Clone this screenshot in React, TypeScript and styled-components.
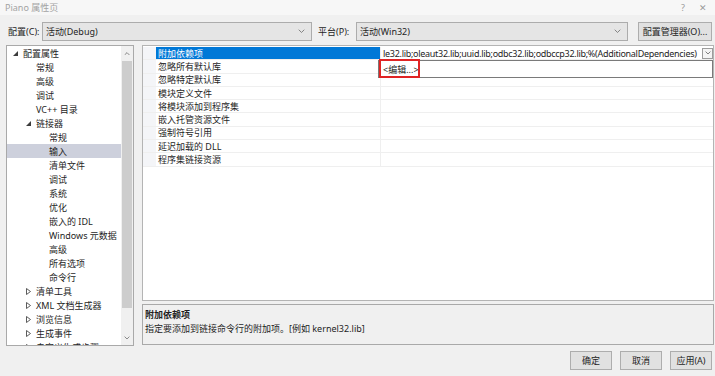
import styled, { createGlobalStyle } from "styled-components";

const GlobalStyle = createGlobalStyle`
  html, body {
    margin: 0;
    padding: 0;
    background: #f0f0f0;
  }
  body {
    font-family: "Noto Sans", "Noto Sans CJK SC", sans-serif;
    font-size: 9px;
    color: #1e1e1e;
  }
`;

const Dialog = styled.div`
  width: 715px;
  height: 376px;
  background: #f0f0f0;
  display: flex;
  flex-direction: column;
  overflow: hidden;
`;

const TitleBar = styled.div`
  height: 15px;
  background: #f7f7f7;
  display: flex;
  align-items: center;
  justify-content: space-between;
  padding: 0 8px 0 5px;
  color: #a3a3a3;
  line-height: 1;
`;

const TitleButtons = styled.div`
  display: flex;
  gap: 14px;
  color: #9a9a9a;
  font-size: 9px;
`;

const Toolbar = styled.div`
  display: flex;
  align-items: center;
  height: 19px;
  margin-top: 7px;
  padding-left: 8px;
`;

const FieldLabel = styled.span<{ $w: number }>`
  width: ${(p) => p.$w}px;
  flex: none;
  white-space: nowrap;
`;

const Combo = styled.div<{ $w: number }>`
  width: ${(p) => p.$w}px;
  height: 19px;
  box-sizing: border-box;
  border: 1px solid #acacac;
  background: #e5e5e5;
  display: flex;
  align-items: center;
  justify-content: space-between;
  padding: 0 6px 0 3px;
  flex: none;
`;

const Gap = styled.div<{ $w: number }>`
  width: ${(p) => p.$w}px;
  flex: none;
`;

const Button = styled.div<{ $w: number }>`
  width: ${(p) => p.$w}px;
  height: 19px;
  box-sizing: border-box;
  border: 1px solid #adadad;
  background: #e1e1e1;
  display: flex;
  align-items: center;
  justify-content: center;
  flex: none;
  white-space: nowrap;
`;

const Main = styled.div`
  display: flex;
  margin-top: 4px;
  padding-left: 6px;
  gap: 8px;
  height: 301px;
`;

const Tree = styled.div`
  width: 128px;
  flex: none;
  box-sizing: border-box;
  border: 1px solid #a9a9a9;
  background: #fff;
  display: flex;
  overflow: hidden;
`;

const TreeList = styled.div`
  flex: 1;
  min-width: 0;
  display: flex;
  flex-direction: column;
  overflow: hidden;
`;

const TreeRow = styled.div<{ $level: number; $selected?: boolean }>`
  height: 14px;
  flex: none;
  display: flex;
  align-items: center;
  padding-left: ${(p) => p.$level * 13 + 6}px;
  background: ${(p) => (p.$selected ? "#cdd0dc" : "transparent")};
  white-space: nowrap;
`;

const Arrow = styled.span`
  width: 10px;
  flex: none;
  display: flex;
  align-items: center;
`;

const Scrollbar = styled.div`
  width: 12px;
  flex: none;
  background: #f0f0f0;
  display: flex;
  flex-direction: column;
  align-items: center;
`;

const ScrollArrow = styled.div`
  height: 15px;
  display: flex;
  align-items: center;
  justify-content: center;
  flex: none;
`;

const Thumb = styled.div`
  width: 10px;
  height: 247px;
  background: #cdcdcd;
  flex: none;
`;

const Track = styled.div`
  flex: 1;
`;

const RightColumn = styled.div`
  flex: 1;
  min-width: 0;
  display: flex;
  flex-direction: column;
  gap: 3px;
  padding-right: 1px;
`;

const Grid = styled.div`
  height: 256px;
  box-sizing: border-box;
  border: 1px solid #b4b4b4;
  background: #fff;
  position: relative;
  padding-top: 1px;
`;

const GridRow = styled.div`
  display: flex;
  height: 13.3px;
  box-sizing: border-box;
  border-bottom: 1px solid #efefef;
`;

const Stripe = styled.div`
  width: 13px;
  flex: none;
  background: #f4f5f8;
`;

const NameCell = styled.div<{ $selected?: boolean }>`
  width: 222px;
  flex: none;
  padding-left: 2px;
  display: flex;
  align-items: center;
  background: ${(p) => (p.$selected ? "#0078d7" : "transparent")};
  color: ${(p) => (p.$selected ? "#fff" : "inherit")};
  border-right: 1px solid #efefef;
  white-space: nowrap;
`;

const ValueCell = styled.div`
  flex: 1;
  min-width: 0;
  display: flex;
  align-items: center;
  padding-left: 2px;
  white-space: nowrap;
  overflow: hidden;
`;

const ValueText = styled.span`
  flex: 1;
  overflow: hidden;
  letter-spacing: -0.29px;
`;

const DropButton = styled.div`
  width: 11px;
  height: 11px;
  box-sizing: border-box;
  border: 1px solid #9c9c9c;
  display: flex;
  align-items: center;
  justify-content: center;
  flex: none;
  background: #f4f4f4;
`;

const Popup = styled.div`
  position: absolute;
  left: 235px;
  right: 0;
  top: 14px;
  height: 18px;
  box-sizing: border-box;
  border: 1px solid #7a7a7a;
  background: #fff;
  display: flex;
  align-items: center;
  padding-left: 4px;
`;

const EditItem = styled.span`
  position: relative;
  white-space: nowrap;
`;

const Marker = styled.span`
  position: absolute;
  left: -4px;
  top: -4px;
  width: 41px;
  height: 19px;
  box-sizing: border-box;
  border: 2px solid #e02424;
`;

const Description = styled.div`
  height: 41px;
  box-sizing: border-box;
  border: 1px solid #a9a9a9;
  padding: 3px 2px;
  display: flex;
  flex-direction: column;
  gap: 1px;
`;

const DescTitle = styled.div`
  font-weight: 700;
`;

const Footer = styled.div`
  display: flex;
  justify-content: flex-end;
  gap: 8px;
  padding-right: 3px;
  margin-top: 5px;
`;

const ChevronDown = ({ size = 7, color = "#707070" }: { size?: number; color?: string }) => (
  <svg width={size} height={size * 0.6} viewBox="0 0 10 6">
    <path d="M1 1 L5 5 L9 1" fill="none" stroke={color} strokeWidth="1.2" />
  </svg>
);

const ChevronUp = ({ size = 7, color = "#707070" }: { size?: number; color?: string }) => (
  <svg width={size} height={size * 0.6} viewBox="0 0 10 6">
    <path d="M1 5 L5 1 L9 5" fill="none" stroke={color} strokeWidth="1.2" />
  </svg>
);

const ExpandedIcon = () => (
  <svg width="5" height="5" viewBox="0 0 5 5">
    <polygon points="5,0 5,5 0,5" fill="#3c3c3c" />
  </svg>
);

const CollapsedIcon = () => (
  <svg width="5" height="7" viewBox="0 0 5 7">
    <polygon points="0.5,0.5 4.5,3.5 0.5,6.5" fill="none" stroke="#4a4a4a" strokeWidth="0.9" />
  </svg>
);

type TreeItem = { text: string; level: number; arrow?: "open" | "closed"; selected?: boolean };

const treeItems: TreeItem[] = [
  { text: "配置属性", level: 0, arrow: "open" },
  { text: "常规", level: 1 },
  { text: "高级", level: 1 },
  { text: "调试", level: 1 },
  { text: "VC++ 目录", level: 1 },
  { text: "链接器", level: 1, arrow: "open" },
  { text: "常规", level: 2 },
  { text: "输入", level: 2, selected: true },
  { text: "清单文件", level: 2 },
  { text: "调试", level: 2 },
  { text: "系统", level: 2 },
  { text: "优化", level: 2 },
  { text: "嵌入的 IDL", level: 2 },
  { text: "Windows 元数据", level: 2 },
  { text: "高级", level: 2 },
  { text: "所有选项", level: 2 },
  { text: "命令行", level: 2 },
  { text: "清单工具", level: 1, arrow: "closed" },
  { text: "XML 文档生成器", level: 1, arrow: "closed" },
  { text: "浏览信息", level: 1, arrow: "closed" },
  { text: "生成事件", level: 1, arrow: "closed" },
  { text: "自定义生成步骤", level: 1, arrow: "closed" },
];

const properties = [
  "附加依赖项",
  "忽略所有默认库",
  "忽略特定默认库",
  "模块定义文件",
  "将模块添加到程序集",
  "嵌入托管资源文件",
  "强制符号引用",
  "延迟加载的 DLL",
  "程序集链接资源",
];

const App = () => {
  return (
    <Dialog>
      <GlobalStyle />
      <TitleBar>
        <span>Piano 属性页</span>
        <TitleButtons>
          <span>?</span>
          <span>✕</span>
        </TitleButtons>
      </TitleBar>

      <Toolbar>
        <FieldLabel $w={34}>配置(C):</FieldLabel>
        <Combo $w={270}>
          <span>活动(Debug)</span>
          <ChevronDown />
        </Combo>
        <Gap $w={6} />
        <FieldLabel $w={38}>平台(P):</FieldLabel>
        <Combo $w={272}>
          <span>活动(Win32)</span>
          <ChevronDown />
        </Combo>
        <Gap $w={10} />
        <Button $w={74}>配置管理器(O)...</Button>
      </Toolbar>

      <Main>
        <Tree>
          <TreeList>
            {treeItems.map((item, i) => (
              <TreeRow key={i} $level={item.level} $selected={item.selected}>
                <Arrow>
                  {item.arrow === "open" && <ExpandedIcon />}
                  {item.arrow === "closed" && <CollapsedIcon />}
                </Arrow>
                {item.text}
              </TreeRow>
            ))}
          </TreeList>
          <Scrollbar>
            <ScrollArrow>
              <ChevronUp size={6} color="#606060" />
            </ScrollArrow>
            <Thumb />
            <Track />
            <ScrollArrow>
              <ChevronDown size={6} color="#606060" />
            </ScrollArrow>
          </Scrollbar>
        </Tree>

        <RightColumn>
          <Grid>
            {properties.map((name, i) => (
              <GridRow key={name}>
                <Stripe />
                <NameCell $selected={i === 0}>{name}</NameCell>
                <ValueCell>
                  {i === 0 && (
                    <>
                      <ValueText>
                        le32.lib;oleaut32.lib;uuid.lib;odbc32.lib;odbccp32.lib;%(AdditionalDependencies)
                      </ValueText>
                      <DropButton>
                        <ChevronDown size={6} color="#505050" />
                      </DropButton>
                    </>
                  )}
                </ValueCell>
              </GridRow>
            ))}
            <Popup>
              <EditItem>
                &lt;编辑...&gt;
                <Marker />
              </EditItem>
            </Popup>
          </Grid>
          <Description>
            <DescTitle>附加依赖项</DescTitle>
            <div>指定要添加到链接命令行的附加项。[例如 kernel32.lib]</div>
          </Description>
        </RightColumn>
      </Main>

      <Footer>
        <Button $w={42}>确定</Button>
        <Button $w={42}>取消</Button>
        <Button $w={42}>应用(A)</Button>
      </Footer>
    </Dialog>
  );
};

export default App;
